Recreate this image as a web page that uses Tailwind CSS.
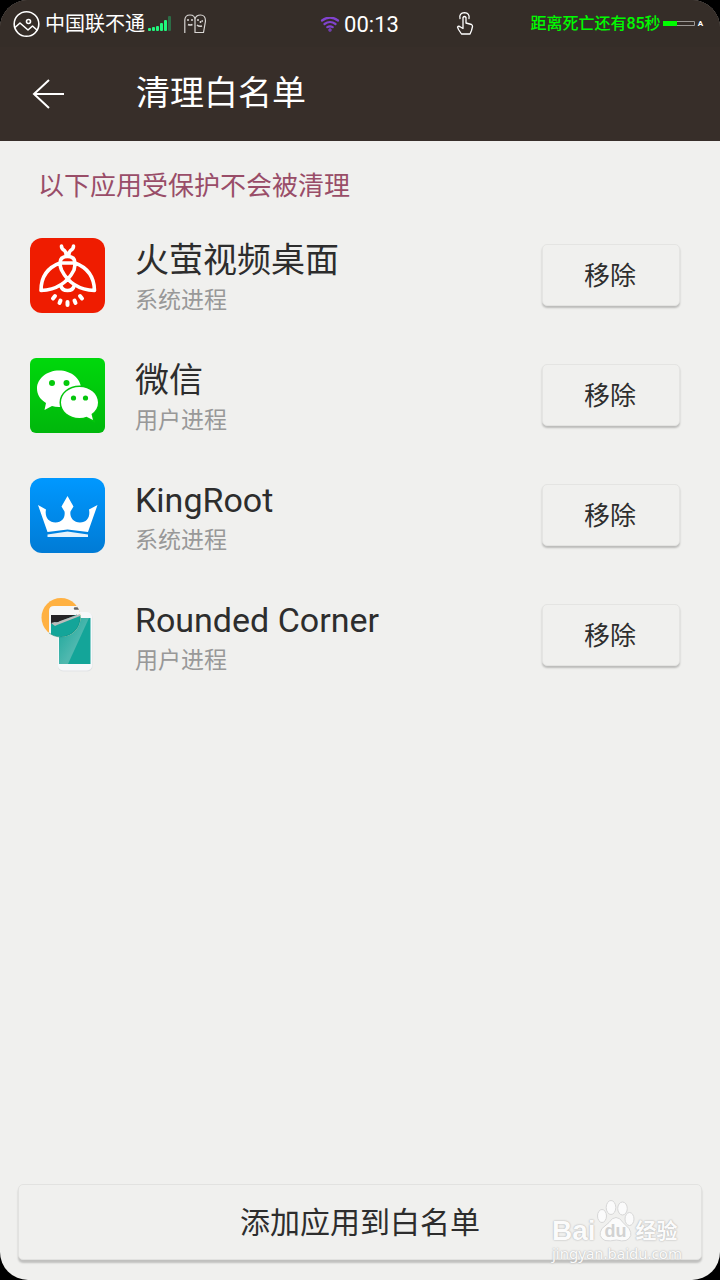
<!DOCTYPE html>
<html lang="zh-CN">
<head>
<meta charset="utf-8">
<meta name="viewport" content="width=device-width, initial-scale=1">
<title>清理白名单</title>
<script src="https://cdn.jsdelivr.net/npm/@tailwindcss/browser@4"></script>
</head>
<body class="bg-black font-['Roboto','Noto_Sans_CJK_SC',sans-serif] text-[#2d2d2d]">
<div class="flex min-h-screen flex-col overflow-hidden rounded-[28px] bg-[#f0f0ee]">
  <header class="bg-[#372e29] text-white">
    <div class="grid h-[47px] grid-cols-[1fr_auto_1fr] items-center bg-[#352d28] pr-[17px] pl-3">
      <div class="flex items-center">
        <svg class="size-7" viewBox="0 0 28 28" fill="none" stroke="#fff" stroke-width="1.6" aria-hidden="true">
          <circle cx="14.500" cy="14" r="12.300"/><circle cx="16.500" cy="11.500" r="2"/>
          <path d="M3 17.500 8 13l8 7 4.500-4 5 4.500" stroke-linejoin="round"/>
        </svg>
        <span class="ml-[5px] text-[20px] leading-7">中国联不通</span>
        <svg class="ml-[3px] h-4 w-6" viewBox="0 0 24 16" fill="#20f77c" aria-hidden="true">
          <rect x="0" y="12" width="3" height="3" rx="1"/><rect x="4" y="11" width="3" height="4" rx="1"/><rect x="8" y="10" width="3" height="5" rx="1"/><rect x="12" y="7" width="3" height="8" rx="1"/><rect x="16" y="4" width="3" height="11" rx="1"/><rect x="20" y="0" width="3" height="15" rx="1" fill="#2c6d46"/>
        </svg>
        <svg class="ml-3 h-5 w-6" viewBox="0 0 24 20" fill="none" stroke="#d8d5d3" stroke-width="1.200" aria-hidden="true">
          <path d="M.8 19V6Q1 1 6 1t5 5v13M11 18V5Q12 1 16.500 1q5 0 5 6l-2 11.500h-8.500"/>
          <path d="M3 6h2M7 6h2M4 10.500q2 1 4.500 0M13 6h2M17.500 7h1.500M13 11q2 2 5 1M16.500 7v2" stroke-width="1.500"/>
        </svg>
      </div>
      <div class="flex items-center gap-1 pt-0.5 pl-1">
        <svg class="h-4 w-5" viewBox="0 0 20 16" fill="none" stroke="#8143cf" stroke-width="2.200" stroke-linecap="round" aria-hidden="true">
          <path d="M2 3.500q8-6 16 0M4.500 7q5.500-4 11 0M7.300 10.200q2.700-1.800 5.400 0"/><circle cx="10" cy="13" r=".6"/>
        </svg>
        <span class="text-[22px] leading-7">00:13</span>
      </div>
      <div class="flex items-center justify-between pl-14">
        <svg class="h-6 w-5" viewBox="0 0 20 24" fill="none" stroke="#fff" stroke-width="1.300" stroke-linejoin="round" stroke-linecap="round" aria-hidden="true">
          <path d="M5 6.500Q3.800 1 9.500.7q5.500.3 4.500 5.800M8 14V5.500q1.500-2 3 0V11l5.500 1.500q1 .5 1 2l-1 4-1.500 3.500H6.500L3.500 17.500l-1-2.500q1-1.500 3 0L8 16.500z"/>
        </svg>
        <div class="flex items-center text-[#00fa00]">
          <span class="text-[16px] leading-6 font-medium">距离死亡还有85秒</span>
          <svg class="ml-0.5 h-2 w-8" viewBox="0 0 32 8" aria-hidden="true"><path d="M.5 1.500h31v4H.5z" fill="none" stroke="#9b9794"/><path d="M0 1h14v5H0z" fill="#00ff00"/></svg>
          <span class="ml-[3px] text-[8px] leading-3 font-bold text-white">A</span>
        </div>
      </div>
    </div>
    <div class="flex h-[94px] items-center pl-[30px]">
      <button type="button" aria-label="返回" class="flex size-9 items-center justify-center">
        <svg class="size-9" viewBox="0 0 36 36" fill="none" stroke="#fff" stroke-width="2" aria-hidden="true"><path d="M19 4 4 18l15 14M4 18h30"/></svg>
      </button>
      <h1 class="ml-[70px] pb-0.5 text-[34px] leading-[48px]">清理白名单</h1>
    </div>
  </header>

  <main class="flex flex-1 flex-col">
    <p class="px-[38px] pt-[27px] pb-[11px] text-[26px] leading-9 text-[#994d68]">以下应用受保护不会被清理</p>
    <ul>
      <li class="flex h-[120px] items-center pr-10 pl-[30px]">
        <svg class="size-[75px] shrink-0" viewBox="0 0 75 75" fill="none" stroke="#fff" stroke-width="3.600" stroke-linecap="round" stroke-linejoin="round" aria-hidden="true">
          <rect width="75" height="75" rx="12" fill="#ef1c00" stroke="none"/>
          <path d="M31.500 8q0 3 3 4.500 2 2 1.500 5.500M43.500 8q0 3-3 4.500-2 2-1.500 5.500M30 25q0-6.500 7.500-6.500T45 25M30 25h15M30 25Q11 32 11 52.500q23-1 33-20.500 1-4 1-7M45 25q19 7 19.500 27.500-23-1-33-20.500Q30 28 30 25M31 48q1 4.500 6.500 4.500T44 48"/>
          <path d="m25 58-2 2.500M30.500 62.500l-1 2.500M37.500 64v3M44.500 62.500l1 2.500M50 58l2 2.500" stroke-width="4"/>
        </svg>
        <div class="ml-[30px] flex-1 pt-1">
          <h2 class="text-[34px] leading-[48px]">火萤视频桌面</h2>
          <p class="text-[23px] leading-[34px] text-[#989898]">系统进程</p>
        </div>
        <button type="button" class="h-[62px] w-[138px] rounded-[5px] border border-[#e4e4e2] bg-[#f0f0ee] pt-0.5 pr-0.5 text-[26px] shadow-[0_2px_2px_rgba(0,0,0,0.22)]">移除</button>
      </li>
      <li class="flex h-[120px] items-center pr-10 pl-[30px]">
        <svg class="size-[75px] shrink-0" viewBox="0 0 75 75" aria-hidden="true">
          <defs><linearGradient id="green" x2="0" y2="1"><stop stop-color="#00d80c"/><stop offset="1" stop-color="#00b70c"/></linearGradient></defs>
          <rect width="75" height="75" rx="6" fill="url(#green)"/>
          <path d="M29 12.500c12 0 22 8 22 18s-10 18.500-22 18.500q-4 0-7-1l-7.500 4 1.500-7C10 41.500 7 36.500 7 30.500c0-10 10-18 22-18z" fill="#fff"/>
          <circle cx="22" cy="25" r="3" fill="#05c90c"/><circle cx="36.500" cy="25" r="3" fill="#05c90c"/>
          <path d="M49.500 29C60 29 68 36 68 44.500q0 7-6.500 11.500l1.500 6-6.500-3.200q-3 1.200-7 1.200C39 60 31 53 31 44.500S39 29 49.500 29z" fill="#fff" stroke="#03c50c" stroke-width="3" paint-order="stroke"/>
          <circle cx="43.500" cy="40" r="2.600" fill="#05c50c"/><circle cx="55.500" cy="40" r="2.600" fill="#05c50c"/>
        </svg>
        <div class="ml-[30px] flex-1 pt-1">
          <h2 class="text-[34px] leading-[48px]">微信</h2>
          <p class="text-[23px] leading-[34px] text-[#989898]">用户进程</p>
        </div>
        <button type="button" class="h-[62px] w-[138px] rounded-[5px] border border-[#e4e4e2] bg-[#f0f0ee] pt-0.5 pr-0.5 text-[26px] shadow-[0_2px_2px_rgba(0,0,0,0.22)]">移除</button>
      </li>
      <li class="flex h-[120px] items-center pr-10 pl-[30px]">
        <svg class="size-[75px] shrink-0" viewBox="0 0 75 75" aria-hidden="true">
          <defs><linearGradient id="blue" x2="0" y2="1"><stop stop-color="#0098ff"/><stop offset="1" stop-color="#007bd5"/></linearGradient></defs>
          <rect width="75" height="75" rx="12" fill="url(#blue)"/>
          <path d="M8 27 16 31.500C14.500 39 18.500 44.500 25.500 44.500S35.500 39 34.500 33.500L31.500 28.500 37.500 18 43.500 28.500 40.500 33.500C39.500 39 43 44.500 50 44.500S60.500 39 59 31.500L67.500 27 58 54 37.500 51.500 17.500 54z" fill="#fff"/>
          <path d="m17.500 56.500 20-3L58 56.500V59H17.500z" fill="#e6f3fc"/>
        </svg>
        <div class="ml-[30px] flex-1 pt-1">
          <h2 class="text-[34px] leading-[48px]">KingRoot</h2>
          <p class="text-[23px] leading-[34px] text-[#989898]">系统进程</p>
        </div>
        <button type="button" class="h-[62px] w-[138px] rounded-[5px] border border-[#e4e4e2] bg-[#f0f0ee] pt-0.5 pr-0.5 text-[26px] shadow-[0_2px_2px_rgba(0,0,0,0.22)]">移除</button>
      </li>
      <li class="flex h-[120px] items-center pr-10 pl-[30px]">
        <svg class="size-[75px] shrink-0" viewBox="0 0 75 75" aria-hidden="true">
          <defs>
            <linearGradient id="teal" gradientUnits="userSpaceOnUse" x1="29" y1="30" x2="49" y2="43"><stop stop-color="#22a99d"/><stop offset="1" stop-color="#4fb8af"/></linearGradient>
            <clipPath id="lens"><circle cx="31" cy="19.500" r="19.500"/></clipPath>
          </defs>
          <rect x="28" y="14.500" width="34.500" height="59" rx="5" fill="#e1e3e5"/>
          <rect x="28" y="14" width="34" height="58.500" rx="5" fill="#f7f8fa"/>
          <path d="M29 20h31.500v46H29z" fill="#14a599"/><path d="M29 20h30L38 66h-9z" fill="url(#teal)"/>
          <circle cx="31" cy="19.500" r="19.500" fill="#ffb142"/>
          <g clip-path="url(#lens)">
            <path d="M19 45V13q0-5 5-5h30v37z" fill="#f7f7f7"/>
            <path d="M21 45V17h32v28z" fill="#14a599"/>
            <path d="M21 17h27v-1L29 24q-5 0-8 2z" fill="#252326"/>
            <path d="M46 17h6v-5z" fill="#f7f7f7"/>
            <path d="m21 25 4-1q2 1 5-1l20-7v2L27 27l-2 1z" fill="#bcbcbc"/>
            <path d="M45 10.500h5" stroke="#666" stroke-width="2.500" stroke-linecap="round"/>
          </g>
          <path d="M50 19.500A19.500 19.500 0 0 1 19 35" fill="none" stroke="#108b82" stroke-opacity=".5"/>
        </svg>
        <div class="ml-[30px] flex-1 pt-1">
          <h2 class="text-[34px] leading-[48px]">Rounded Corner</h2>
          <p class="text-[23px] leading-[34px] text-[#989898]">用户进程</p>
        </div>
        <button type="button" class="h-[62px] w-[138px] rounded-[5px] border border-[#e4e4e2] bg-[#f0f0ee] pt-0.5 pr-0.5 text-[26px] shadow-[0_2px_2px_rgba(0,0,0,0.22)]">移除</button>
      </li>
    </ul>
  </main>

  <footer class="relative px-[18px] pb-5">
    <button type="button" class="h-[76px] w-full rounded-[5px] border border-[#e2e2e0] bg-[#f0f0ee] text-[30px] shadow-[0_3px_2px_rgba(0,0,0,0.2)]">添加应用到白名单</button>
    <div class="pointer-events-none absolute right-10 bottom-4 w-[128px] text-[#fbfbfb] [text-shadow:0_0_2px_#b0b0b0,0_0_1px_#c8c8c8]">
      <div class="flex h-[44px] items-end">
        <span class="font-['Liberation_Sans'] text-[28px] leading-6 font-bold">Bai</span>
        <div class="relative h-[44px] w-10 shrink-0">
          <svg class="h-[44px] w-10" viewBox="0 2 40 44" fill="#fbfbfb" stroke="#d7d7d7" aria-hidden="true">
            <ellipse cx="6" cy="19" rx="4.500" ry="6.500"/><ellipse cx="15" cy="10.500" rx="4.800" ry="7"/><ellipse cx="26.500" cy="11.500" rx="4.800" ry="6.500"/><ellipse cx="33.500" cy="22" rx="4.500" ry="6.500"/>
            <path d="M20 20.500q4 0 7 5l6 6q5 8-3 12-4 1-9.500-.5Q14 44.500 9 43.500q-8-4-3-12l7-6q3-5 7-5z"/>
          </svg>
          <span class="absolute inset-x-0 bottom-0.5 text-center font-['Liberation_Sans'] text-[18px] leading-5 font-bold text-[#d2d2d2] [text-shadow:none]">du</span>
        </div>
        <span class="shrink-0 text-[21px] leading-6 font-bold">经验</span>
      </div>
      <div class="font-['Noto_Sans'] text-[15px] leading-[21px]">jingyan.baidu.com</div>
    </div>
  </footer>
</div>
</body>
</html>
